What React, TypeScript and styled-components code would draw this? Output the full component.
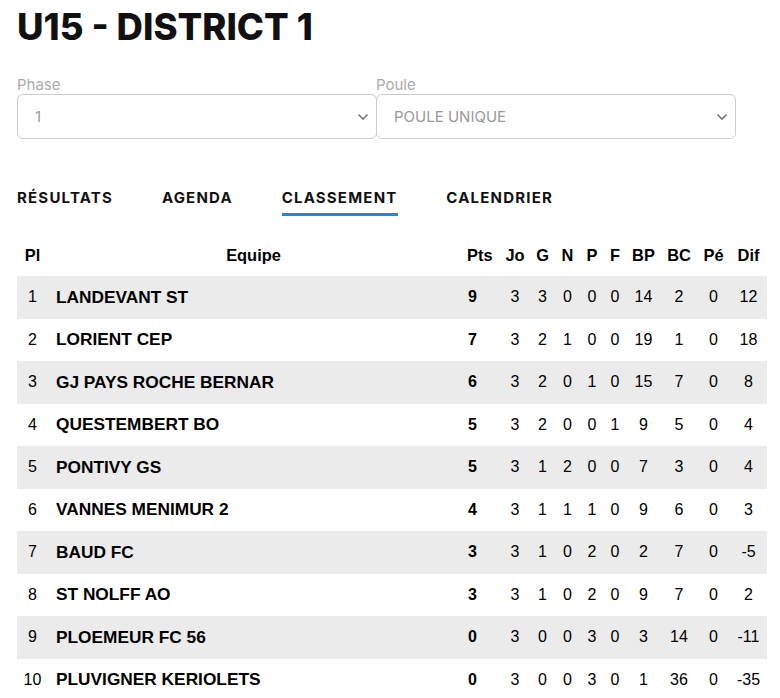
import React from "react";
import styled, { createGlobalStyle } from "styled-components";

const Global = createGlobalStyle`
  html, body { margin: 0; padding: 0; background: #fff; }
  body { font-family: "Liberation Sans", Arial, sans-serif; color: #000; }
`;

const Page = styled.div`
  width: 750px;
  padding: 0 13px 0 17px;
`;

const Title = styled.h1`
  margin: 0;
  padding-top: 8px;
  font-family: Inter, "Liberation Sans", sans-serif;
  font-weight: 800;
  font-size: 36.5px;
  line-height: 38px;
  color: #111;
`;

const Filters = styled.div`
  display: grid;
  grid-template-columns: 359px 359px;
  margin-top: 30px;
`;

const Field = styled.div`
  display: flex;
  flex-direction: column;
`;

const Label = styled.label`
  font-family: Inter, "Liberation Sans", sans-serif;
  font-size: 15px;
  line-height: 18px;
  color: #aaa;
  font-weight: 400;
`;

const SelectBox = styled.div`
  position: relative;
  height: 43px;
  border: 1px solid #ccc;
  border-radius: 6px;
  display: flex;
  align-items: center;
  padding: 0 17px;
  font-family: Inter, "Liberation Sans", sans-serif;
  font-size: 15px;
  color: #999;
  width: 324px;
`;

const Chevron = styled.svg`
  position: absolute;
  right: 7px;
  top: 18px;
`;

const Tabs = styled.nav`
  display: flex;
  gap: 50px;
  margin-top: 50px;
`;

const Tab = styled.div<{ $active?: boolean }>`
  font-family: Inter, "Liberation Sans", sans-serif;
  font-weight: 700;
  font-size: 15px;
  letter-spacing: 1.2px;
  margin-right: -1.2px;
  line-height: 18px;
  color: #111;
  padding-bottom: 6px;
  border-bottom: 3px solid ${(p) => (p.$active ? "#1e88e5" : "transparent")};
`;

const Table = styled.div`
  margin-top: 19px;
  display: grid;
  grid-template-columns: 31px 1fr 41px 30px 25px 25px 24px 22px 35px 36px 33px 37px;
  width: 750px;
`;

const Row = styled.div<{ $shade?: boolean; $h: number }>`
  display: contents;
  & > div {
    background: ${(p) => (p.$shade ? "#ebebeb" : "#fff")};
    height: ${(p) => p.$h}px;
  }
`;

const Cell = styled.div<{ $align?: string; $bold?: boolean; $pad?: number }>`
  display: flex;
  align-items: center;
  justify-content: ${(p) => p.$align || "center"};
  padding-left: ${(p) => p.$pad || 0}px;
  font-size: 16px;
  font-weight: ${(p) => (p.$bold ? 700 : 400)};
  color: #000;
  white-space: nowrap;
`;

const TeamCell = styled(Cell)`
  font-size: 17.3px;
`;

const HeadCell = styled(Cell)`
  font-weight: 700;
  font-size: 16.4px;
`;

const data: [number, string, number, number, number, number, number, number, number, number, number, number][] = [
  [1, "LANDEVANT ST", 9, 3, 3, 0, 0, 0, 14, 2, 0, 12],
  [2, "LORIENT CEP", 7, 3, 2, 1, 0, 0, 19, 1, 0, 18],
  [3, "GJ PAYS ROCHE BERNAR", 6, 3, 2, 0, 1, 0, 15, 7, 0, 8],
  [4, "QUESTEMBERT BO", 5, 3, 2, 0, 0, 1, 9, 5, 0, 4],
  [5, "PONTIVY GS", 5, 3, 1, 2, 0, 0, 7, 3, 0, 4],
  [6, "VANNES MENIMUR 2", 4, 3, 1, 1, 1, 0, 9, 6, 0, 3],
  [7, "BAUD FC", 3, 3, 1, 0, 2, 0, 2, 7, 0, -5],
  [8, "ST NOLFF AO", 3, 3, 1, 0, 2, 0, 9, 7, 0, 2],
  [9, "PLOEMEUR FC 56", 0, 3, 0, 0, 3, 0, 3, 14, 0, -11],
  [10, "PLUVIGNER KERIOLETS", 0, 3, 0, 0, 3, 0, 1, 36, 0, -35],
];

const heads = ["Jo", "G", "N", "P", "F", "BP", "BC", "Pé", "Dif"];

const ChevronIcon = () => (
  <Chevron width="12" height="8" viewBox="0 0 12 8">
    <polyline points="1.5,1.5 6,6 10.5,1.5" fill="none" stroke="#777" strokeWidth="1.6" />
  </Chevron>
);

export default function App() {
  return (
    <Page>
      <Global />
      <Title>U15 - DISTRICT 1</Title>
      <Filters>
        <Field>
          <Label>Phase</Label>
          <SelectBox>
            1
            <ChevronIcon />
          </SelectBox>
        </Field>
        <Field>
          <Label>Poule</Label>
          <SelectBox>
            POULE UNIQUE
            <ChevronIcon />
          </SelectBox>
        </Field>
      </Filters>
      <Tabs>
        <Tab>RÉSULTATS</Tab>
        <Tab>AGENDA</Tab>
        <Tab $active>CLASSEMENT</Tab>
        <Tab>CALENDRIER</Tab>
      </Tabs>
      <Table>
        <Row $h={41}>
          <HeadCell>Pl</HeadCell>
          <HeadCell>Equipe</HeadCell>
          <HeadCell $align="flex-start" $pad={8}>Pts</HeadCell>
          {heads.map((h) => (
            <HeadCell key={h}>{h}</HeadCell>
          ))}
        </Row>
        {data.map((r, i) => (
          <Row key={r[0]} $shade={i % 2 === 0} $h={42.5}>
            <Cell>{r[0]}</Cell>
            <TeamCell $align="flex-start" $pad={8} $bold>{r[1]}</TeamCell>
            <Cell $align="flex-start" $pad={9} $bold>{r[2]}</Cell>
            {r.slice(3).map((v, j) => (
              <Cell key={j}>{v}</Cell>
            ))}
          </Row>
        ))}
      </Table>
    </Page>
  );
}
